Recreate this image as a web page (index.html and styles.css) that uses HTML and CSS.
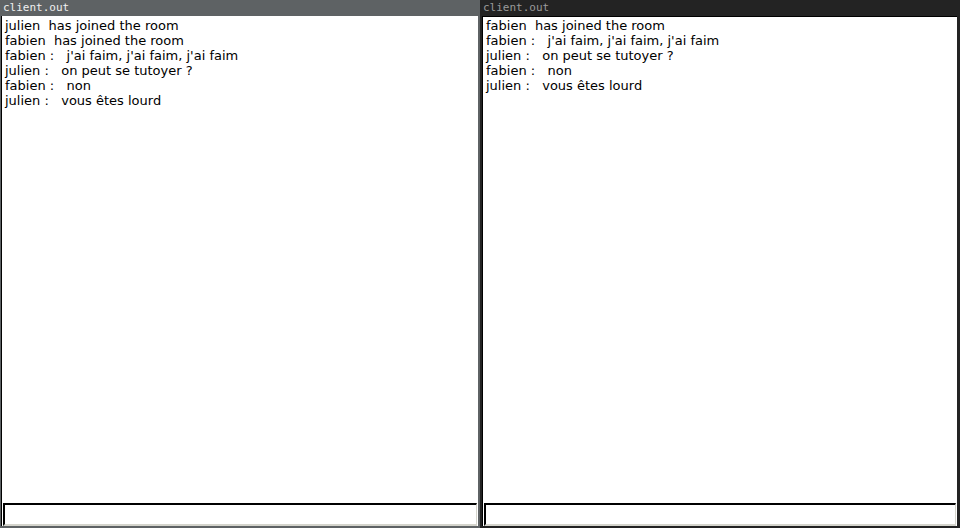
FILE: index.html
```html
<!DOCTYPE html>
<html>
<head>
<meta charset="utf-8">
<link rel="stylesheet" href="styles.css">
</head>
<body>
<div class="desktop">
  <div class="win active">
    <div class="title">client.out</div>
    <div class="body">
      <div class="log">
        <div>julien&nbsp; has joined the room</div>
        <div>fabien&nbsp; has joined the room</div>
        <div>fabien :&nbsp;&nbsp; j'ai faim, j'ai faim, j'ai faim</div>
        <div>julien :&nbsp;&nbsp; on peut se tutoyer ?</div>
        <div>fabien :&nbsp;&nbsp; non</div>
        <div>julien :&nbsp;&nbsp; vous êtes lourd</div>
      </div>
      <input class="entry" type="text">
    </div>
  </div>
  <div class="win inactive">
    <div class="title">client.out</div>
    <div class="body">
      <div class="log">
        <div>fabien&nbsp; has joined the room</div>
        <div>fabien :&nbsp;&nbsp; j'ai faim, j'ai faim, j'ai faim</div>
        <div>julien :&nbsp;&nbsp; on peut se tutoyer ?</div>
        <div>fabien :&nbsp;&nbsp; non</div>
        <div>julien :&nbsp;&nbsp; vous êtes lourd</div>
      </div>
      <input class="entry" type="text">
    </div>
  </div>
</div>
</body>
</html>
```
FILE: styles.css
```css
html, body {
  margin: 0;
  padding: 0;
  width: 960px;
  height: 528px;
  overflow: hidden;
  background: #232323;
}
.desktop {
  display: flex;
  width: 960px;
  height: 528px;
}
.win {
  width: 480px;
  height: 528px;
  display: flex;
  flex-direction: column;
  box-sizing: border-box;
}
.win.active {
  background: #5e6264;
  padding: 0 2px 2px 1px;
}
.win.inactive {
  background: #232323;
  padding: 0 3px 2px 2px;
}
.title {
  height: 16px;
  line-height: 16px;
  font-family: "DejaVu Sans Mono", monospace;
  font-size: 11px;
  padding-left: 2px;
}
.active .title { color: #f0f0f0; }
.inactive .title { color: #9a9a9a; padding-left: 1px; }
.body {
  flex: 1;
  background: #ffffff;
  display: flex;
  flex-direction: column;
  border-left: 1px solid #000;
}
.inactive .body { border-top: 1px solid #000; }
.log {
  flex: 1;
  padding: 1px 0 0 3px;
  font-family: "DejaVu Sans", sans-serif;
  font-size: 13px;
  line-height: 15px;
  color: #000;
  white-space: nowrap;
}
.active .log { padding-top: 2px; }
.entry {
  display: block;
  box-sizing: border-box;
  height: 23px;
  margin: 0 1px 0 1px;
  border-style: solid;
  border-width: 2px 1px 2px 2px;
  border-color: #000 #d4d4cc #d4d4cc #000;
  background: #fff;
  padding: 0;
  outline: none;
}
```
